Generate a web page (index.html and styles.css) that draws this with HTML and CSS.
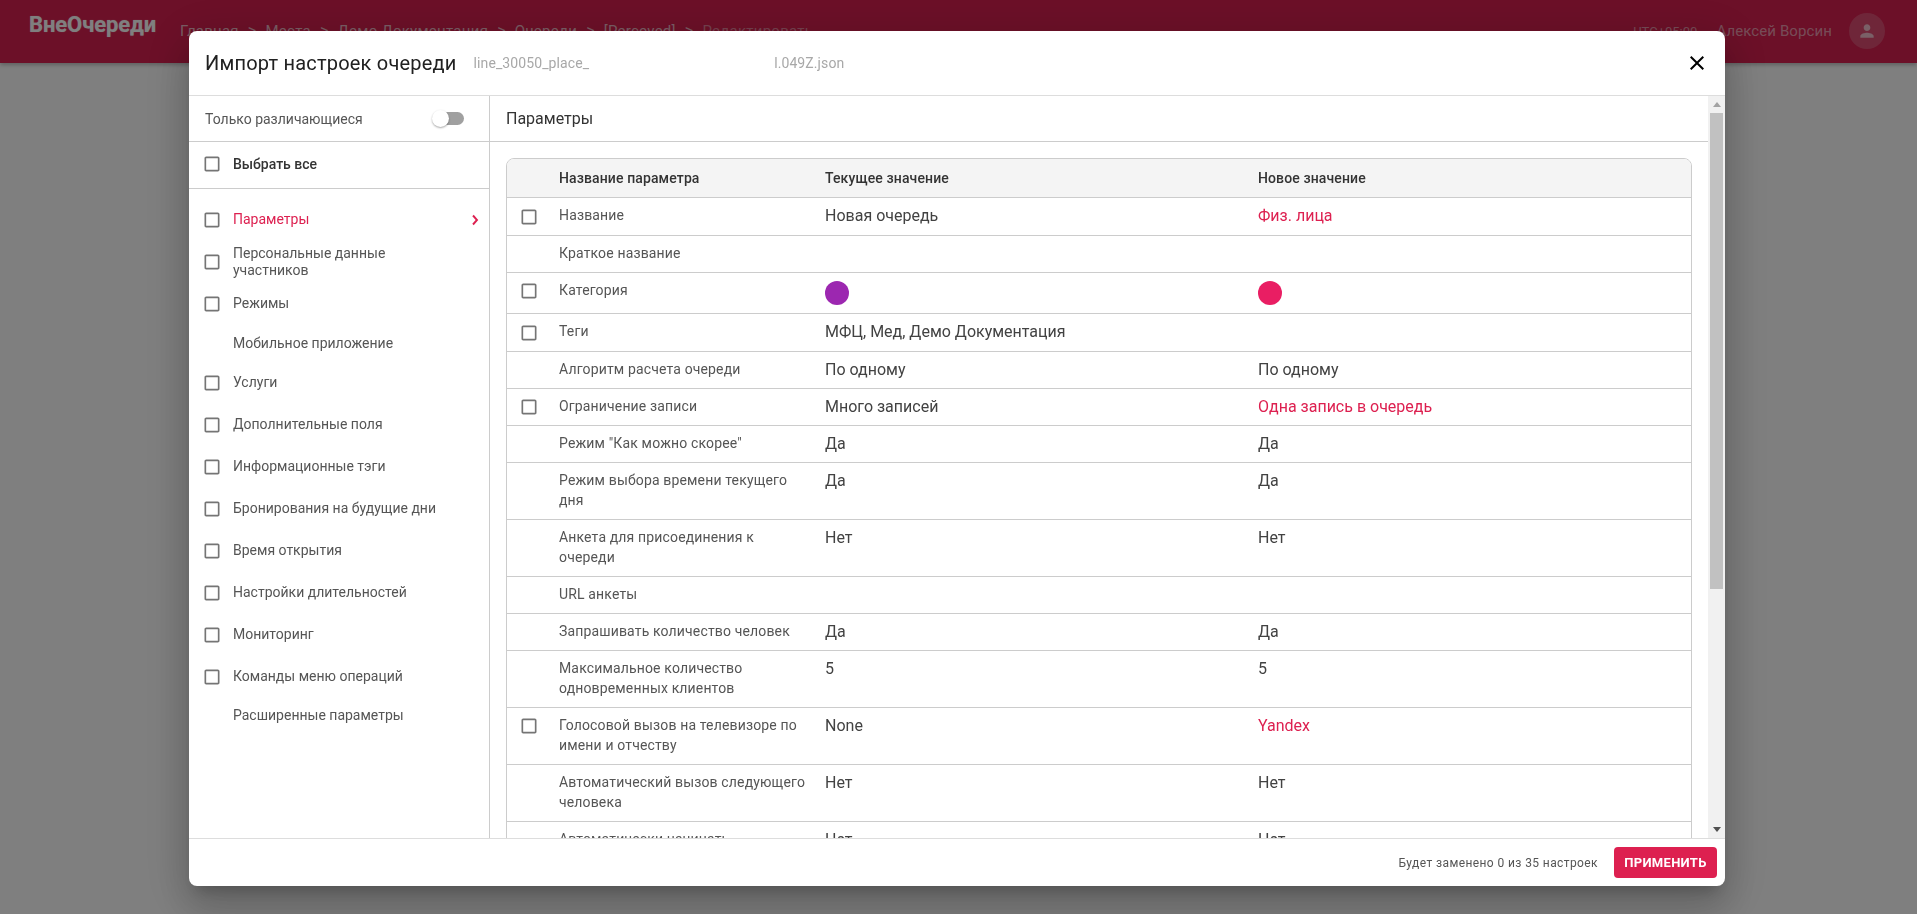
FILE: index.html
```html
<!DOCTYPE html>
<html lang="ru">
<head>
<meta charset="utf-8">
<title>Импорт настроек очереди</title>
<link rel="stylesheet" href="styles.css">
</head>
<body>
<svg class="defs" width="0" height="0" aria-hidden="true">
  <symbol id="cb" viewBox="0 0 24 24"><path d="M19 5v14H5V5h14m0-2H5c-1.1 0-2 .9-2 2v14c0 1.1.9 2 2 2h14c1.1 0 2-.9 2-2V5c0-1.1-.9-2-2-2z"/></symbol>
</svg>
<div class="page">
  <header class="topbar">
    <div class="logo">ВнеОчереди</div>
    <nav class="crumbs">
      <span>Главная</span><i>&gt;</i><span>Места</span><i>&gt;</i><span>Демо Документация</span><i>&gt;</i><span>Очереди</span><i>&gt;</i><span>[Perceved]</span><i>&gt;</i><span class="crumb-last">Редактировать</span>
    </nav>
    <div class="user">
      <span class="tz">UTC+05:00</span>
      <span class="uname">Алексей Ворсин</span>
      <span class="avatar">
        <svg viewBox="0 0 24 24" width="24" height="24"><path d="M12 12c2.21 0 4-1.79 4-4s-1.79-4-4-4-4 1.79-4 4 1.79 4 4 4zm0 2c-2.67 0-8 1.34-8 4v2h16v-2c0-2.66-5.33-4-8-4z"/></svg>
      </span>
    </div>
  </header>
</div>

<div class="overlay">
  <section class="modal">
    <div class="modal-head">
      <h1 class="modal-title">Импорт настроек очереди</h1>
      <span class="file"><span>line_30050_place_</span><span class="file-end">l.049Z.json</span></span>
      <svg class="close" viewBox="0 0 24 24" width="24" height="24"><path d="M19 6.41 17.59 5 12 10.59 6.41 5 5 6.41 10.59 12 5 17.59 6.41 19 12 13.41 17.59 19 19 17.59 13.41 12z"/></svg>
    </div>

    <div class="modal-body">
      <div class="scroll-content">
        <aside class="side">
          <div class="only-diff">
            <span>Только различающиеся</span>
            <span class="toggle"><span class="toggle-thumb"></span></span>
          </div>
          <div class="select-all">
            <svg class="cb"><use href="#cb"/></svg>
            <span>Выбрать все</span>
          </div>
          <ul class="nav">
            <li class="nav-item active"><svg class="cb"><use href="#cb"/></svg><span>Параметры</span>
              <svg class="chev" viewBox="0 0 8 12" width="8" height="12"><path d="M2 1.5 6 6 2 10.5" fill="none" stroke-width="1.9"/></svg></li>
            <li class="nav-item"><svg class="cb"><use href="#cb"/></svg><span>Персональные данные<br>участников</span></li>
            <li class="nav-item"><svg class="cb"><use href="#cb"/></svg><span>Режимы</span></li>
            <li class="nav-item plain"><span>Мобильное приложение</span></li>
            <li class="nav-item"><svg class="cb"><use href="#cb"/></svg><span>Услуги</span></li>
            <li class="nav-item"><svg class="cb"><use href="#cb"/></svg><span>Дополнительные поля</span></li>
            <li class="nav-item"><svg class="cb"><use href="#cb"/></svg><span>Информационные тэги</span></li>
            <li class="nav-item"><svg class="cb"><use href="#cb"/></svg><span>Бронирования на будущие дни</span></li>
            <li class="nav-item"><svg class="cb"><use href="#cb"/></svg><span>Время открытия</span></li>
            <li class="nav-item"><svg class="cb"><use href="#cb"/></svg><span>Настройки длительностей</span></li>
            <li class="nav-item"><svg class="cb"><use href="#cb"/></svg><span>Мониторинг</span></li>
            <li class="nav-item"><svg class="cb"><use href="#cb"/></svg><span>Команды меню операций</span></li>
            <li class="nav-item plain"><span>Расширенные параметры</span></li>
          </ul>
        </aside>

        <main class="main">
          <div class="main-title">Параметры</div>
          <div class="table-pad">
            <div class="table-wrap">
              <table class="params">
                <colgroup><col class="c-check"><col class="c-name"><col class="c-val"><col></colgroup>
                <thead>
                  <tr><th></th><th>Название параметра</th><th>Текущее значение</th><th>Новое значение</th></tr>
                </thead>
                <tbody>
                  <tr class="has-cb"><td class="check"><svg class="cb"><use href="#cb"/></svg></td><td class="name">Название</td><td>Новая очередь</td><td class="new">Физ. лица</td></tr>
                  <tr><td class="check"></td><td class="name">Краткое название</td><td></td><td></td></tr>
                  <tr><td class="check"><svg class="cb"><use href="#cb"/></svg></td><td class="name">Категория</td><td><span class="dot dot-purple"></span></td><td><span class="dot dot-pink"></span></td></tr>
                  <tr class="has-cb"><td class="check"><svg class="cb"><use href="#cb"/></svg></td><td class="name">Теги</td><td>МФЦ, Мед, Демо Документация</td><td></td></tr>
                  <tr><td class="check"></td><td class="name">Алгоритм расчета очереди</td><td>По одному</td><td>По одному</td></tr>
                  <tr><td class="check"><svg class="cb"><use href="#cb"/></svg></td><td class="name">Ограничение записи</td><td>Много записей</td><td class="new">Одна запись в очередь</td></tr>
                  <tr><td class="check"></td><td class="name">Режим "Как можно скорее"</td><td>Да</td><td>Да</td></tr>
                  <tr><td class="check"></td><td class="name">Режим выбора времени текущего дня</td><td>Да</td><td>Да</td></tr>
                  <tr><td class="check"></td><td class="name">Анкета для присоединения к очереди</td><td>Нет</td><td>Нет</td></tr>
                  <tr><td class="check"></td><td class="name">URL анкеты</td><td></td><td></td></tr>
                  <tr><td class="check"></td><td class="name">Запрашивать количество человек</td><td>Да</td><td>Да</td></tr>
                  <tr><td class="check"></td><td class="name">Максимальное количество одновременных клиентов</td><td>5</td><td>5</td></tr>
                  <tr><td class="check"><svg class="cb"><use href="#cb"/></svg></td><td class="name">Голосовой вызов на телевизоре по имени и отчеству</td><td>None</td><td class="new">Yandex</td></tr>
                  <tr><td class="check"></td><td class="name">Автоматический вызов следующего человека</td><td>Нет</td><td>Нет</td></tr>
                  <tr><td class="check"></td><td class="name">Автоматически начинать обслуживание</td><td>Нет</td><td>Нет</td></tr>
                </tbody>
              </table>
            </div>
          </div>
        </main>
      </div>

      <div class="scrollbar">
        <span class="arrow arrow-up"></span>
        <div class="thumb-track"><div class="thumb"></div></div>
        <span class="arrow arrow-down"></span>
      </div>
    </div>

    <footer class="modal-foot">
      <span class="count">Будет заменено 0 из 35 настроек</span>
      <button class="apply" type="button">ПРИМЕНИТЬ</button>
    </footer>
  </section>
</div>
</body>
</html>
```

FILE: styles.css
```css
* { box-sizing: border-box; }
html, body { height: 100%; }
body {
  margin: 0;
  background: #fff;
  font-family: Roboto, "Noto Sans", "Liberation Sans", sans-serif;
  overflow: hidden;
}
.defs { position: absolute; }

/* page behind the dialog */
.page { height: 100vh; overflow: hidden; }
.topbar {
  height: 63px;
  display: flex;
  background: #d82050;
  color: #fff;
  box-shadow: 0 2px 4px rgba(0, 0, 0, .25);
}
.logo {
  margin: 12px 0 0 29px;
  font-size: 22px;
  line-height: 26px;
  font-weight: 700;
  letter-spacing: -.1px;
  color: #fff;
  text-shadow: 0 0 1px rgba(255, 255, 255, .6);
}
.crumbs {
  display: flex;
  gap: 9px;
  margin: 21px 0 0 24px;
  font-size: 15px;
  line-height: 20px;
  color: rgba(255, 255, 255, .7);
  letter-spacing: .25px;
}
.crumbs i { font-style: normal; font-size: 16px; }
.crumb-last { color: rgba(255, 255, 255, .45); }
.user {
  margin-left: auto;
  display: flex;
  align-items: center;
  height: 62px;
  padding-right: 32px;
  font-size: 15px;
  color: rgba(255, 255, 255, .55);
}
.tz { font-size: 13px; margin-right: 19px; }
.uname { letter-spacing: .1px; }
.avatar {
  width: 36px;
  height: 36px;
  margin-left: 17px;
  border-radius: 50%;
  background: rgba(255, 255, 255, .2);
  display: flex;
  align-items: center;
  justify-content: center;
}
.avatar svg { fill: rgba(255, 255, 255, .65); width: 20px; height: 20px; }

/* overlay and dialog */
.overlay {
  position: fixed;
  inset: 0;
  background: rgba(0, 0, 0, .5);
  padding: 31px 0 0 189px;
}
.modal {
  width: 1536px;
  height: 855px;
  background: #fff;
  border-radius: 8px;
  overflow: hidden;
  display: flex;
  flex-direction: column;
  box-shadow: 0 11px 15px -7px rgba(0, 0, 0, .2), 0 24px 38px 3px rgba(0, 0, 0, .14), 0 9px 46px 8px rgba(0, 0, 0, .12);
}
.modal-head {
  height: 65px;
  flex: none;
  display: flex;
  align-items: center;
  padding: 0 16px;
  border-bottom: 1px solid #ddd;
}
.modal-title {
  margin: 0;
  font-size: 20px;
  font-weight: 400;
  letter-spacing: .2px;
  color: #212121;
}
.file {
  margin-left: 17px;
  font-size: 14px;
  letter-spacing: .1px;
  color: #a8a8a8;
  display: flex;
}
.file-end { margin-left: 185px; }
.close { margin-left: auto; fill: #000; }

.modal-body { flex: 1; min-height: 0; display: flex; }
.scroll-content { flex: 1; min-width: 0; display: flex; overflow: hidden; }

/* sidebar */
.side {
  width: 301px;
  flex: none;
  border-right: 1px solid #ccc;
  font-size: 14px;
  color: #555;
}
.cb { width: 20px; height: 20px; fill: #757575; display: block; flex: none; }
.only-diff {
  height: 46px;
  padding: 0 14px 0 16px;
  display: flex;
  align-items: center;
  justify-content: space-between;
  border-bottom: 1px solid #ccc;
}
.toggle {
  position: relative;
  width: 29px;
  height: 13px;
  margin-right: 11px;
  border-radius: 7px;
  background: #a0a0a0;
}
.toggle-thumb {
  position: absolute;
  left: -3px;
  top: -2px;
  width: 17px;
  height: 17px;
  border-radius: 50%;
  background: #fff;
  box-shadow: 0 1px 2px rgba(0, 0, 0, .35);
}
.select-all {
  height: 47px;
  padding: 0 0 2px 13px;
  display: flex;
  align-items: center;
  gap: 11px;
  border-bottom: 1px solid #ccc;
  color: #333;
  font-weight: 500;
}
.nav { list-style: none; margin: 0; padding: 10px 0 0; }
.nav-item {
  position: relative;
  min-height: 42px;
  padding-left: 13px;
  display: flex;
  align-items: center;
  gap: 11px;
  line-height: 17.5px;
}
.nav-item.plain { min-height: 36.5px; padding-left: 44px; }
.nav-item.active { color: #dd2050; }
.chev { position: absolute; right: 10px; top: 15px; stroke: #dd2050; }

/* main panel */
.main { flex: 1; min-width: 0; }
.main-title {
  height: 46px;
  padding-left: 16px;
  display: flex;
  align-items: center;
  border-bottom: 1px solid #ccc;
  font-size: 16px;
  color: #333;
}
.table-pad { padding: 16px 16px 0; }
.table-wrap {
  border: 1px solid #ccc;
  border-radius: 8px;
  overflow: hidden;
}
.params {
  width: 100%;
  border-collapse: separate;
  border-spacing: 0;
  table-layout: fixed;
  font-size: 16px;
  line-height: 20px;
  color: #424242;
}
.c-check { width: 52px; }
.c-name { width: 266px; }
.c-val { width: 433px; }
.params th {
  height: 39px;
  padding: 0;
  background: #f4f4f4;
  border-bottom: 1px solid #ccc;
  font-size: 14px;
  font-weight: 500;
  letter-spacing: .12px;
  text-align: left;
  color: #333;
}
.params td {
  padding: 8px 16px 8px 0;
  vertical-align: top;
  border-bottom: 1px solid #ccc;
}
.params .check { padding: 8px 0 0 12px; }
.params .has-cb .check { padding: 9px 0 8px 12px; }
.params .name {
  padding: 7px 16px 9px 0;
  font-size: 14px;
  letter-spacing: .15px;
  color: #555;
}
.params .new { color: #dd2050; }
.dot { display: block; width: 24px; height: 24px; border-radius: 50%; }
.dot-purple { background: #9c27b0; }
.dot-pink { background: #e91e63; }

/* scrollbar */
.scrollbar {
  width: 17px;
  flex: none;
  background: #f1f1f1;
  display: flex;
  flex-direction: column;
  align-items: center;
}
.arrow { width: 0; height: 0; border-left: 4px solid transparent; border-right: 4px solid transparent; flex: none; }
.arrow-up { margin: 6px 0 5px; border-bottom: 5px solid #a3a3a3; }
.arrow-down { margin: 5px 0 6px; border-top: 5px solid #505050; }
.thumb-track { flex: 1; width: 100%; padding: 1px 2px 0; }
.thumb { height: 476px; background: #c1c1c1; }

/* footer */
.modal-foot {
  height: 48px;
  flex: none;
  display: flex;
  align-items: center;
  justify-content: flex-end;
  padding: 0 8px 0 0;
  gap: 16px;
  border-top: 1px solid #ddd;
}
.count { font-size: 12px; letter-spacing: .4px; color: #555; }
.apply {
  width: 103px;
  height: 31px;
  border: 0;
  padding: 0;
  border-radius: 4px;
  background: #dd2050;
  color: #fff;
  font-family: inherit;
  font-size: 13px;
  font-weight: 700;
  letter-spacing: .3px;
}
```
